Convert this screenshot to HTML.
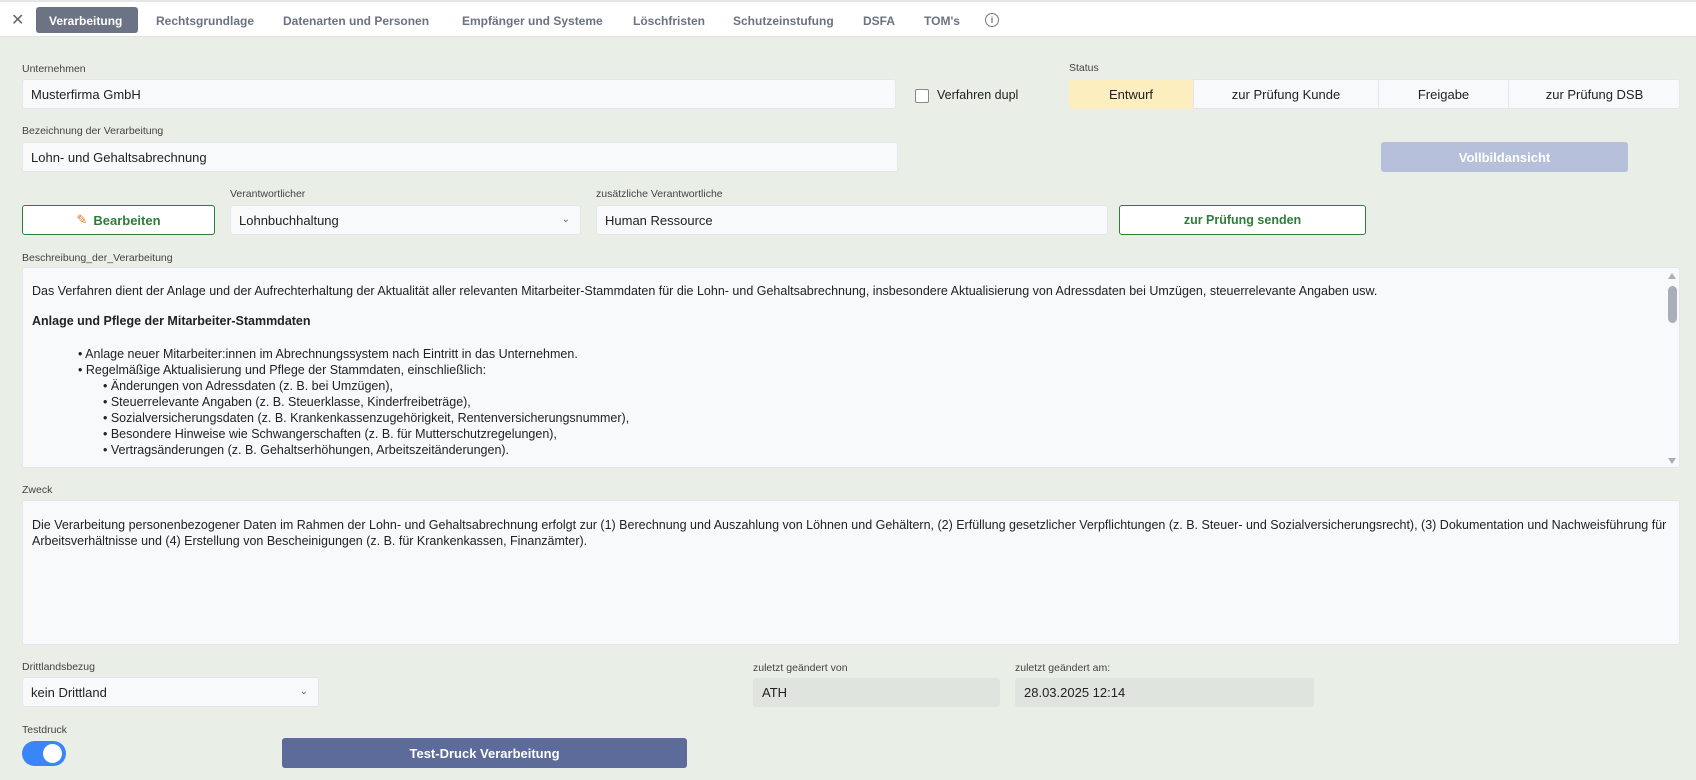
<!DOCTYPE html>
<html><head><meta charset="utf-8"><style>
*{box-sizing:border-box;margin:0;padding:0}
body{width:1696px;height:780px;background:#e9eee6;font-family:"Liberation Sans","DejaVu Sans",sans-serif;color:#222;position:relative;overflow:hidden}
.a{position:absolute}
.top{left:0;top:0;width:1696px;height:37px;background:#fff;border-top:2px solid #e4e6e8;border-bottom:1px solid #e0e3e0}
.tab{position:absolute;top:12px;font-size:12px;color:#6b7280;font-weight:bold;white-space:nowrap}
.lbl{position:absolute;font-size:10.5px;color:#444}
.in{position:absolute;background:#f8f9fb;border:1px solid #e3e6ea;border-radius:3px;font-size:13px;padding-left:8px;display:flex;align-items:center}
.btn{position:absolute;display:flex;align-items:center;justify-content:center;font-size:13px;font-weight:bold;border-radius:3px}
.t{position:absolute;font-size:12.5px;white-space:nowrap;color:#222}
.chev{position:absolute;right:10px;top:8px;font-size:10px;color:#666}
</style></head><body>
<div class="a top">
 <div class="tab" style="left:11px;top:8px;font-size:16px;font-weight:normal;color:#666">✕</div>
 <div class="a" style="left:36px;top:5px;width:102px;height:26px;background:#6b7385;border-radius:3px"></div>
 <div class="tab" style="left:49px;color:#fff">Verarbeitung</div>
 <div class="tab" style="left:156px">Rechtsgrundlage</div>
 <div class="tab" style="left:283px">Datenarten und Personen</div>
 <div class="tab" style="left:462px">Empfänger und Systeme</div>
 <div class="tab" style="left:633px">Löschfristen</div>
 <div class="tab" style="left:733px">Schutzeinstufung</div>
 <div class="tab" style="left:863px">DSFA</div>
 <div class="tab" style="left:924px">TOM's</div>
 <div class="a" style="left:985px;top:11px;width:14px;height:14px;border:1.3px solid #777;border-radius:50%;font-size:9px;color:#777;text-align:center;line-height:12px;font-weight:bold">i</div>
</div>

<div class="lbl" style="left:22px;top:63px">Unternehmen</div>
<div class="in" style="left:22px;top:79px;width:874px;height:30px">Musterfirma GmbH</div>
<div class="a" style="left:915px;top:89px;width:14px;height:14px;border:1px solid #888;border-radius:2px;background:#fff"></div>
<div class="t" style="left:937px;top:88px">Verfahren dupl</div>

<div class="lbl" style="left:1069px;top:62px">Status</div>
<div class="a" style="left:1069px;top:79px;width:611px;height:30px;border:1px solid #e3e6ea;background:#f8f9fb;border-radius:3px"></div>
<div class="btn" style="left:1069px;top:79px;width:124px;height:30px;background:#fdeec0;font-weight:normal;border-radius:3px 0 0 3px">Entwurf</div>
<div class="btn" style="left:1193px;top:79px;width:185px;height:30px;font-weight:normal;border-left:1px solid #e3e6ea">zur Prüfung Kunde</div>
<div class="btn" style="left:1378px;top:79px;width:130px;height:30px;font-weight:normal;border-left:1px solid #e3e6ea">Freigabe</div>
<div class="btn" style="left:1508px;top:79px;width:172px;height:30px;font-weight:normal;border-left:1px solid #e3e6ea">zur Prüfung DSB</div>

<div class="lbl" style="left:22px;top:125px">Bezeichnung der Verarbeitung</div>
<div class="in" style="left:22px;top:142px;width:876px;height:30px">Lohn- und Gehaltsabrechnung</div>
<div class="btn" style="left:1381px;top:142px;width:247px;height:30px;background:#b6c0da;color:#fff">Vollbildansicht</div>

<div class="btn" style="left:22px;top:205px;width:193px;height:30px;background:#fff;border:1px solid #2f7d3a;color:#2f7d3a"><span style="color:#e8731c;margin-right:6px">✎</span>Bearbeiten</div>
<div class="lbl" style="left:230px;top:188px">Verantwortlicher</div>
<div class="in" style="left:230px;top:205px;width:351px;height:30px">Lohnbuchhaltung<span class="chev">⌄</span></div>
<div class="lbl" style="left:596px;top:188px">zusätzliche Verantwortliche</div>
<div class="in" style="left:596px;top:205px;width:512px;height:30px">Human Ressource</div>
<div class="btn" style="left:1119px;top:205px;width:247px;height:30px;background:#fff;border:1px solid #2f7d3a;color:#2f7d3a;font-size:12.5px">zur Prüfung senden</div>

<div class="lbl" style="left:22px;top:252px">Beschreibung_der_Verarbeitung</div>
<div class="a" style="left:22px;top:267px;width:1658px;height:201px;background:#f8f9fb;border:1px solid #e3e6ea;border-radius:3px"></div>
<div class="t" style="left:32px;top:284px">Das Verfahren dient der Anlage und der Aufrechterhaltung der Aktualität aller relevanten Mitarbeiter-Stammdaten für die Lohn- und Gehaltsabrechnung, insbesondere Aktualisierung von Adressdaten bei Umzügen, steuerrelevante Angaben usw.</div>
<div class="t" style="left:32px;top:314px;font-weight:bold">Anlage und Pflege der Mitarbeiter-Stammdaten</div>
<div class="t" style="left:78px;top:347px">• Anlage neuer Mitarbeiter:innen im Abrechnungssystem nach Eintritt in das Unternehmen.</div>
<div class="t" style="left:78px;top:363px">• Regelmäßige Aktualisierung und Pflege der Stammdaten, einschließlich:</div>
<div class="t" style="left:103px;top:379px">• Änderungen von Adressdaten (z. B. bei Umzügen),</div>
<div class="t" style="left:103px;top:395px">• Steuerrelevante Angaben (z. B. Steuerklasse, Kinderfreibeträge),</div>
<div class="t" style="left:103px;top:411px">• Sozialversicherungsdaten (z. B. Krankenkassenzugehörigkeit, Rentenversicherungsnummer),</div>
<div class="t" style="left:103px;top:427px">• Besondere Hinweise wie Schwangerschaften (z. B. für Mutterschutzregelungen),</div>
<div class="t" style="left:103px;top:443px">• Vertragsänderungen (z. B. Gehaltserhöhungen, Arbeitszeitänderungen).</div>
<div class="a" style="left:1668px;top:273px;width:0;height:0;border-left:4.5px solid transparent;border-right:4.5px solid transparent;border-bottom:6px solid #a9aeb8"></div>
<div class="a" style="left:1668px;top:286px;width:9px;height:37px;background:#a9aeb8;border-radius:5px"></div>
<div class="a" style="left:1668px;top:458px;width:0;height:0;border-left:4.5px solid transparent;border-right:4.5px solid transparent;border-top:6px solid #a9aeb8"></div>

<div class="lbl" style="left:22px;top:484px">Zweck</div>
<div class="a" style="left:22px;top:500px;width:1658px;height:145px;background:#f8f9fb;border:1px solid #e3e6ea;border-radius:3px"></div>
<div class="t" style="left:32px;top:518px">Die Verarbeitung personenbezogener Daten im Rahmen der Lohn- und Gehaltsabrechnung erfolgt zur (1) Berechnung und Auszahlung von Löhnen und Gehältern, (2) Erfüllung gesetzlicher Verpflichtungen (z. B. Steuer- und Sozialversicherungsrecht), (3) Dokumentation und Nachweisführung für</div>
<div class="t" style="left:32px;top:534px">Arbeitsverhältnisse und (4) Erstellung von Bescheinigungen (z. B. für Krankenkassen, Finanzämter).</div>

<div class="lbl" style="left:22px;top:661px">Drittlandsbezug</div>
<div class="in" style="left:22px;top:677px;width:297px;height:30px">kein Drittland<span class="chev">⌄</span></div>
<div class="lbl" style="left:753px;top:662px">zuletzt geändert von</div>
<div class="in" style="left:753px;top:678px;width:247px;height:29px;background:#dfe5de;border-color:#dfe5de">ATH</div>
<div class="lbl" style="left:1015px;top:662px">zuletzt geändert am:</div>
<div class="in" style="left:1015px;top:678px;width:299px;height:29px;background:#dfe5de;border-color:#dfe5de">28.03.2025 12:14</div>

<div class="lbl" style="left:22px;top:724px">Testdruck</div>
<div class="a" style="left:22px;top:741px;width:44px;height:25px;background:#3a86f7;border-radius:13px"></div>
<div class="a" style="left:43px;top:744px;width:19px;height:19px;background:#fff;border-radius:50%"></div>
<div class="btn" style="left:282px;top:738px;width:405px;height:30px;background:#5d6b9a;color:#fff">Test-Druck Verarbeitung</div>
</body></html>
